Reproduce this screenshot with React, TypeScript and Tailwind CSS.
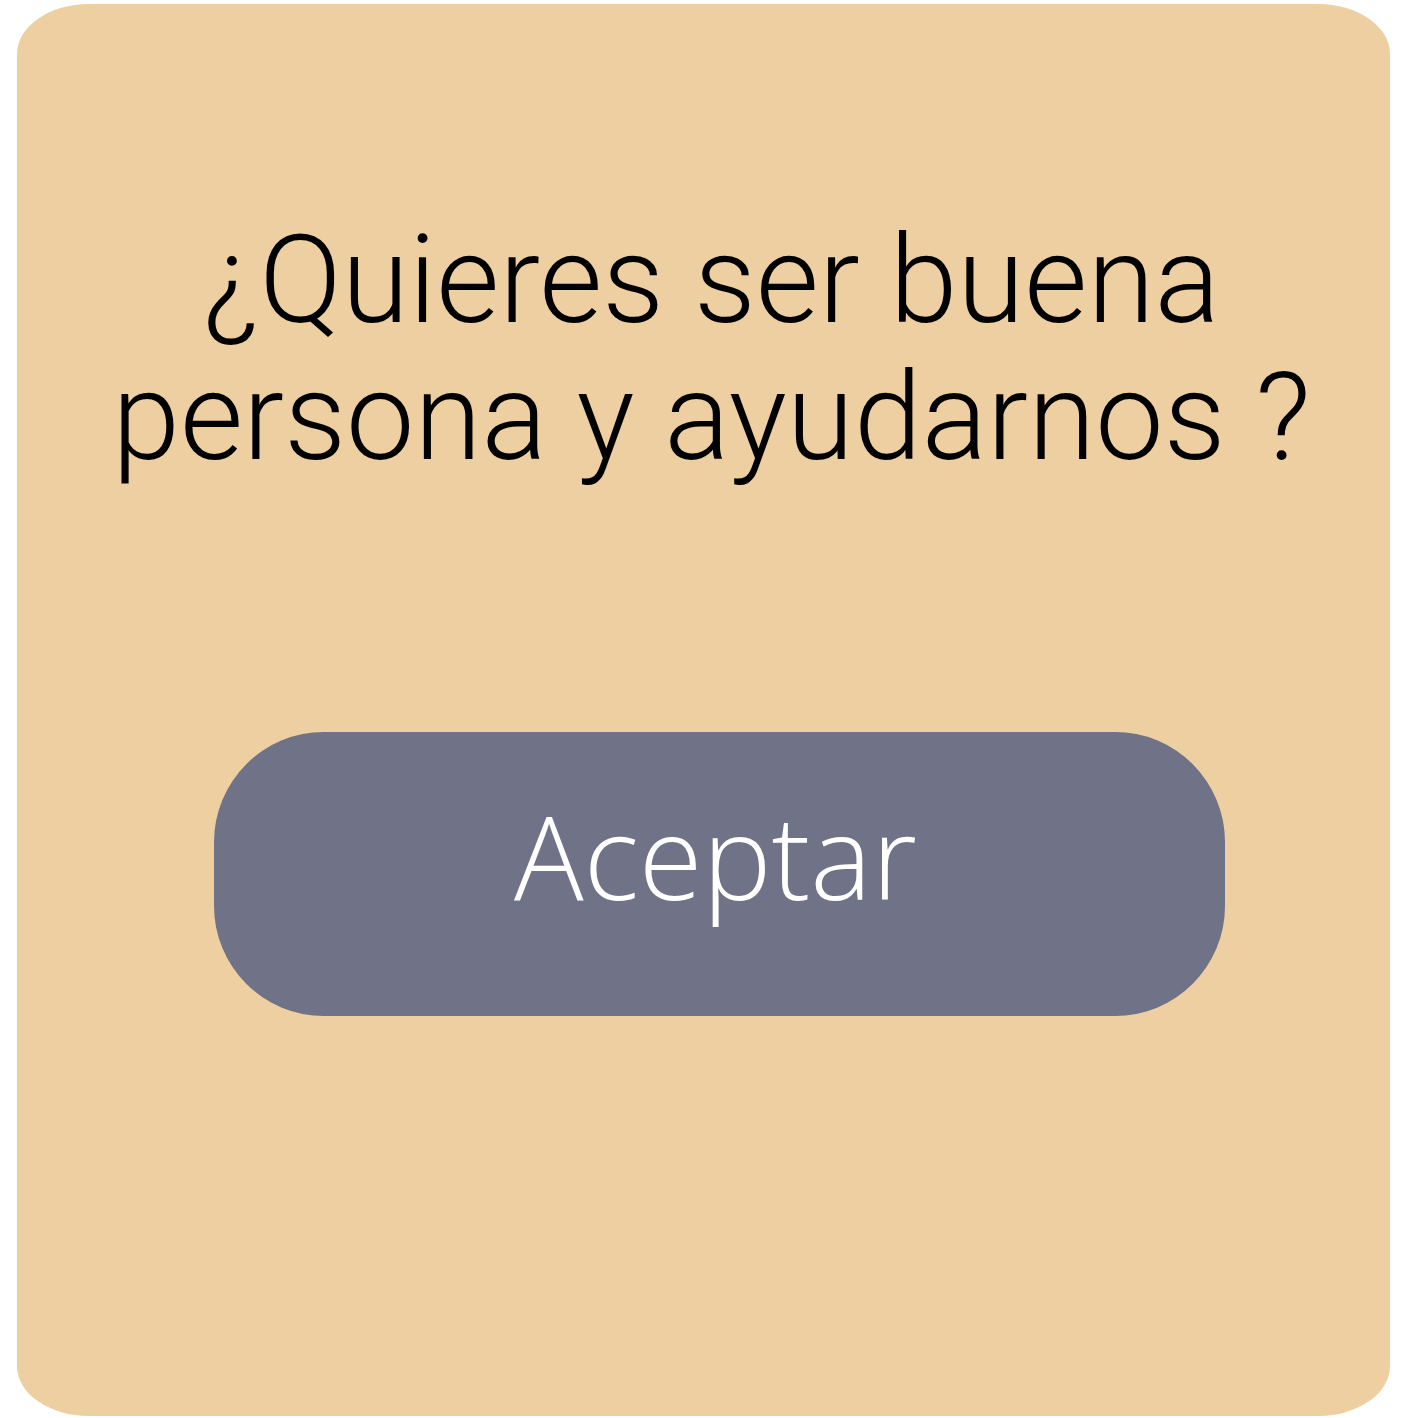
import React from "react";

export default function App() {
  return (
    <div className="w-[1418px] h-[1418px] bg-white">
      <div className="ml-[17px] pt-[4px]">
        <div className="w-[1373px] h-[1412px] bg-[#EECFA1] rounded-[72px/50px] flex flex-col items-center pl-[16px]">
          <h1
            className="mt-[208px] text-center text-black text-[122px] leading-[137px] font-light"
            style={{ fontFamily: "Roboto, 'Noto Sans', sans-serif" }}
          >
            ¿Quieres ser buena
            <br />
            persona y ayudarnos ?
          </h1>
          <button
            className="mt-[246px] ml-[16px] w-[1011px] h-[284px] rounded-[110px] bg-[#707287] text-white text-[116px] font-light flex items-center justify-center pb-[38px] pr-[8px]"
            style={{ fontFamily: "'Open Sans', Roboto, sans-serif" }}
          >
            Aceptar
          </button>
        </div>
      </div>
    </div>
  );
}
